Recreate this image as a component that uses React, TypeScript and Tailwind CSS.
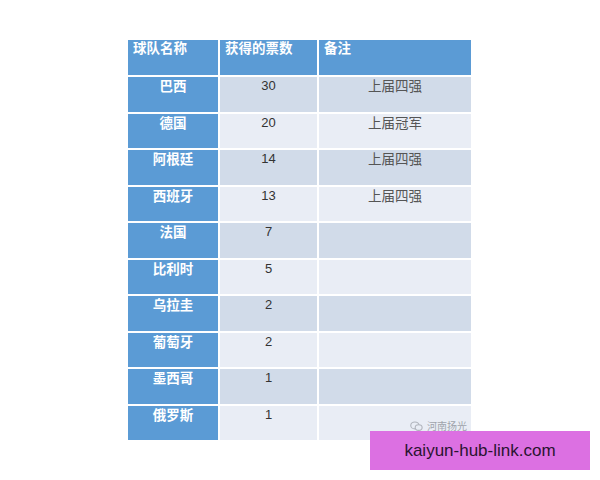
import React from 'react';

type Row = { team: string; votes: string; note: string };

const rows: Row[] = [
  { team: '巴西', votes: '30', note: '上届四强' },
  { team: '德国', votes: '20', note: '上届冠军' },
  { team: '阿根廷', votes: '14', note: '上届四强' },
  { team: '西班牙', votes: '13', note: '上届四强' },
  { team: '法国', votes: '7', note: '' },
  { team: '比利时', votes: '5', note: '' },
  { team: '乌拉圭', votes: '2', note: '' },
  { team: '葡萄牙', votes: '2', note: '' },
  { team: '墨西哥', votes: '1', note: '' },
  { team: '俄罗斯', votes: '1', note: '' },
];

const cjk = "font-['Noto_Sans_CJK_SC',sans-serif]";

export default function App() {
  return (
    <div className="relative h-[480px] w-[600px] overflow-hidden bg-white">
      <div className="pl-[128px] pt-[40px]">
        <div className={`grid w-[343px] grid-cols-[90px_97px_152px] gap-[2px] bg-white ${cjk}`}>
          {/* header */}
          <div className="h-[35px] bg-[#5b9bd5] pl-[5px] text-[13.5px] font-bold leading-[15px] text-white">球队名称</div>
          <div className="h-[35px] bg-[#5b9bd5] pl-[5px] text-[13.5px] font-bold leading-[15px] text-white">获得的票数</div>
          <div className="h-[35px] bg-[#5b9bd5] pl-[5px] text-[13.5px] font-bold leading-[15px] text-white">备注</div>

          {rows.map((r, i) => {
            const shade = i % 2 === 0 ? 'bg-[#d1dbe9]' : 'bg-[#e9edf5]';
            return (
              <React.Fragment key={r.team}>
                <div className="h-[34.5px] bg-[#5b9bd5] text-center text-[13.5px] font-bold leading-[16px] text-white">
                  {r.team}
                </div>
                <div
                  className={`h-[34.5px] ${shade} pt-[1px] text-center font-['Liberation_Sans',sans-serif] text-[13px] leading-[16px] text-[#333]`}
                >
                  {r.votes}
                </div>
                <div className={`relative h-[34.5px] ${shade} text-center text-[13.5px] leading-[16px] text-[#555]`}>
                  {r.note}
                  {i === rows.length - 1 && (
                    <div className="absolute bottom-[8px] right-[4px] flex items-center gap-[4px] text-[10px] leading-[12px] text-[#a0a4ac]">
                      <svg width="13" height="11" viewBox="0 0 12 10" fill="none" stroke="#b0b4bc" strokeWidth="1">
                        <ellipse cx="4.5" cy="4" rx="3.8" ry="3.2" />
                        <ellipse cx="8" cy="6" rx="3.2" ry="2.6" fill="#e9edf5" />
                      </svg>
                      <span>河南扬光</span>
                    </div>
                  )}
                </div>
              </React.Fragment>
            );
          })}
        </div>
      </div>

      <div className="absolute left-[370px] top-[431px] flex h-[39px] w-[220px] items-center justify-center bg-[#dc70e2] font-['Liberation_Sans',sans-serif] text-[17px] text-[#2a1430]">
        kaiyun-hub-link.com
      </div>
    </div>
  );
}
